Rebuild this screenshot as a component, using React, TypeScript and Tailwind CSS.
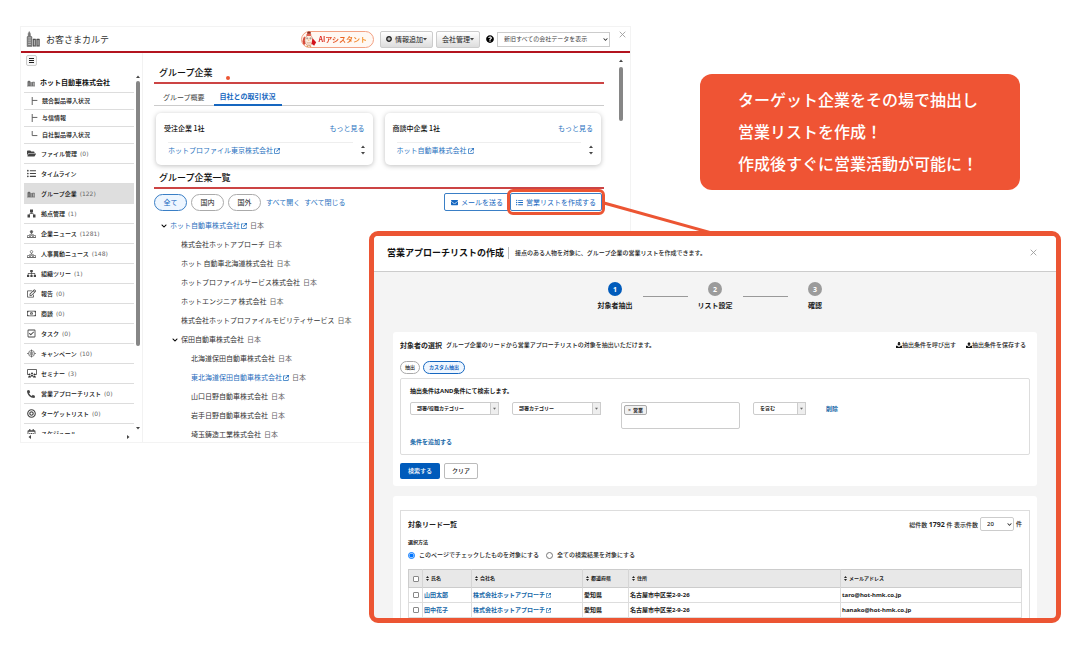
import { useState } from "react";
import type { ReactNode } from "react";
import {
  FaBullseye,
  FaChevronDown,
  FaEnvelope,
  FaFolderOpen,
  FaListUl,
  FaPhoneAlt,
  FaPlusCircle,
  FaQuestionCircle,
  FaRegCalendarAlt,
  FaRegCheckSquare,
  FaRegEdit,
  FaRegMoneyBillAlt,
  FaSitemap,
} from "react-icons/fa";
import { FaArrowUpRightFromSquare } from "react-icons/fa6";

/* ---------- Icons ---------- */

const LogoIcon = () => (
  <svg viewBox="0 0 26 30" className="h-4 w-3.5" fill="none">
    <path d="M2 29V11l2-2V5l2-4 2 4v4l3 2v18z" fill="#777" stroke="#666" />
    <path d="M4 13h5M4 17h5M4 21h5M4 25h5" stroke="#ddd" strokeWidth="1.500" />
    <path d="M13 29V15h5v14M20 29V15h5v14" fill="#555" stroke="#444" />
    <path d="M15.500 17v10M22.500 17v10" stroke="#ddd" strokeWidth="1.500" />
  </svg>
);

const BuildingIcon = () => (
  <svg viewBox="0 0 16 14" className="h-2 w-2" fill="none">
    <path d="M1 13V4l3-2 3 2v9z" fill="#666" />
    <path d="M7 13V6h4v7M11 13V5h4v8" fill="#999" stroke="#666" />
    <path d="M4 6v6M13 7v4" stroke="#ccc" strokeWidth=".8" />
    <path d="M0 13.500h16" stroke="#666" />
  </svg>
);

const NewsIcon = ({ head }: { head: string }) => (
  <svg viewBox="0 0 18 16" className="h-2 w-[9px]" fill="none" stroke="#555" strokeWidth="1.300">
    <circle cx="9" cy="3.500" r="2.500" fill={head} />
    <path d="M9 6v3M4 10l5-2 5 2" />
    <path d="M1 15v-4h4v4zM7 15v-4h4v4zM13 15v-4h4v4zM0 15h18" />
  </svg>
);

const BaseIcon = () => (
  <svg viewBox="0 0 18 18" className="h-[9px] w-[9px]" fill="#444">
    <path d="M6 1h6v6H6zM1 11h5v6H1zM12 11h5v6h-5z" />
    <path d="M9 7v3M3.500 11l5.500-3 5.500 3" fill="none" stroke="#444" strokeWidth="1.500" />
  </svg>
);

const CampaignIcon = () => (
  <svg viewBox="0 0 18 18" className="h-[9px] w-[9px]" fill="none" stroke="#444" strokeWidth="1.300">
    <circle cx="9" cy="9" r="6" />
    <path d="M9 1v16M6.500 6v6M11.500 6v6M0 9h3M15 9h3" />
  </svg>
);

const SeminarIcon = () => (
  <svg viewBox="0 0 20 18" className="h-[9px] w-2.5" fill="none" stroke="#333" strokeWidth="1.500">
    <path d="M4 11H1V1h18v10h-3" />
    <g fill="#333" stroke="none">
      <circle cx="5" cy="11" r="2" />
      <circle cx="10" cy="9" r="2" />
      <circle cx="15" cy="11" r="2" />
      <path d="M2 17c0-4 6-4 6 0zM7 15c0-4 6-4 6 0zM12 17c0-4 6-4 6 0z" />
    </g>
  </svg>
);

const BranchIcon = ({ last = false }: { last?: boolean }) => (
  <svg viewBox="0 0 12 14" className="h-2 w-[7px]" fill="none" stroke="#555" strokeWidth="1.600">
    <path d={last ? "M2 0v8h9" : "M2 0v14M2 6h9"} />
  </svg>
);

const MenuIcon = () => (
  <svg viewBox="0 0 5 5" className="h-[5px] w-[5px]" fill="#222">
    <path d="M0 0h5v1H0zM0 2h5v1H0zM0 4h5v1H0z" />
  </svg>
);

const MascotIcon = () => (
  <svg viewBox="0 0 44 48" className="h-4 w-[15px]">
    <path d="M8 16c-8 6-9 20-2 26l4-4z" fill="#d94a3a" />
    <ellipse cx="20" cy="28" rx="12" ry="16" fill="#fdeee0" stroke="#b5634b" strokeWidth="1.500" />
    <path d="M12 13c0-7 16-7 16 0l-3 2H15z" fill="#e2604e" />
    <path d="M15 5c0-5 11-5 11 0v3H15z" fill="#8c2a1e" />
    <circle cx="15" cy="22" r="2.500" fill="#fff" stroke="#7a4232" />
    <circle cx="25" cy="22" r="2.500" fill="#fff" stroke="#7a4232" />
    <circle cx="15" cy="22" r="1.200" fill="#333" />
    <circle cx="25" cy="22" r="1.200" fill="#333" />
    <path d="M18 26h4l-2 4z" fill="#e88b2b" />
    <path d="M13 33c4 3 10 3 14 0M15 38c3 2 7 2 10 0" fill="none" stroke="#c98163" strokeWidth="1.500" />
    <path d="M31 22l11 12-6 10-8-6z" fill="#d3121a" />
    <path d="M13 44h5v3h-5zM22 44h5v3h-5z" fill="#d48a2d" />
  </svg>
);

const CloseIcon = () => (
  <svg viewBox="0 0 10 10" className="h-[7px] w-[7px]" stroke="#999" strokeWidth="1.200">
    <path d="M1 1l8 8M9 1l-8 8" />
  </svg>
);

const Triangle = ({ dir = "down" }: { dir?: "up" | "down" | "left" | "right" }) => {
  const paths = {
    up: "M0 6l4-5 4 5z",
    down: "M0 2l4 5 4-5z",
    left: "M6 0L1 4l5 4z",
    right: "M2 0l5 4-5 4z",
  };
  return (
    <svg viewBox="0 0 8 8" className="h-1 w-1 shrink-0" fill="#444">
      <path d={paths[dir]} />
    </svg>
  );
};

const TrayIcon = ({ up = false }: { up?: boolean }) => (
  <svg viewBox="0 0 14 14" className="h-1.5 w-1.5" fill="#111">
    <path d={up ? "M7 0l4.500 5H9v4H5V5H2.500z" : "M5 0h4v4h2.500L7 9 2.500 4H5z"} />
    <path d="M0 9h3l2 2h4l2-2h3v5H0z" />
  </svg>
);

const SortIcon = () => (
  <svg viewBox="0 0 6 10" className="h-[5px] w-[3px]" fill="#222">
    <path d="M0 4l3-4 3 4zM0 6l3 4 3-4z" />
  </svg>
);

/* ---------- Data ---------- */

type MenuItem = { label: string; count?: number; icon: ReactNode; active?: boolean };

const subMenu = ["競合製品導入状況", "与信情報", "自社製品導入状況"];

const menu: MenuItem[] = [
  { label: "ファイル管理", count: 0, icon: <FaFolderOpen /> },
  { label: "タイムライン", icon: <FaListUl /> },
  { label: "グループ企業", count: 122, icon: <BuildingIcon />, active: true },
  { label: "拠点管理", count: 1, icon: <BaseIcon /> },
  { label: "企業ニュース", count: 1281, icon: <NewsIcon head="#555" /> },
  { label: "人事異動ニュース", count: 148, icon: <NewsIcon head="none" /> },
  { label: "組織ツリー", count: 1, icon: <FaSitemap /> },
  { label: "報告", count: 0, icon: <FaRegEdit /> },
  { label: "商談", count: 0, icon: <FaRegMoneyBillAlt /> },
  { label: "タスク", count: 0, icon: <FaRegCheckSquare /> },
  { label: "キャンペーン", count: 10, icon: <CampaignIcon /> },
  { label: "セミナー", count: 3, icon: <SeminarIcon /> },
  { label: "営業アプローチリスト", count: 0, icon: <FaPhoneAlt className="h-2 w-2" /> },
  { label: "ターゲットリスト", count: 0, icon: <FaBullseye /> },
  { label: "スケジュール", icon: <FaRegCalendarAlt /> },
];

const tree = [
  { name: "ホット自動車株式会社", level: 0, open: true, link: true },
  { name: "株式会社ホットアプローチ", level: 1 },
  { name: "ホット 自動車北海道株式会社", level: 1 },
  { name: "ホットプロファイルサービス株式会社", level: 1 },
  { name: "ホットエンジニア 株式会社", level: 1 },
  { name: "株式会社ホットプロファイルモビリティサービス", level: 1 },
  { name: "保田自動車株式会社", level: 1, open: true },
  { name: "北海道保田自動車株式会社", level: 2 },
  { name: "東北海道保田自動車株式会社", level: 2, link: true },
  { name: "山口日野自動車株式会社", level: 2 },
  { name: "岩手日野自動車株式会社", level: 2 },
  { name: "埼玉鋳造工業株式会社", level: 2 },
];

const indents = ["pl-[7px]", "pl-[18px]", "pl-7"];

const steps = ["対象者抽出", "リスト設定", "確認"];

const leads = [
  { name: "山田太郎", company: "株式会社ホットアプローチ", pref: "愛知県", address: "名古屋市中区栄2-9-26", mail: "taro@hot-hmk.co.jp" },
  { name: "田中花子", company: "株式会社ホットアプローチ", pref: "愛知県", address: "名古屋市中区栄2-9-26", mail: "hanako@hot-hmk.co.jp" },
];

/* ---------- Customer window ---------- */

const WindowHeader = () => (
  <header className="flex h-[26px] items-center border-b-2 border-[#b3141f] pr-1 pl-[5px]">
    <LogoIcon />
    <h1 className="ml-1.5 text-[9px] text-[#333]">お客さまカルテ</h1>
    <div className="ml-auto flex items-center gap-[3px] text-[7px] text-[#222]">
      <button className="flex h-[17px] items-center gap-px rounded-full border border-[#f3a183] bg-[#fff8f3] pr-1.5 font-bold">
        <MascotIcon />
        <span className="bg-linear-to-r from-[#d9101c] to-[#f79a28] bg-clip-text text-transparent">AIアシスタント</span>
      </button>
      <button className="ml-[3px] flex h-[17px] items-center gap-[3px] rounded-xs border border-[#ccc] bg-linear-to-b from-white to-[#ddd] px-[5px]">
        <FaPlusCircle className="h-1.5 w-1.5" />
        <span className="flex items-center">情報追加<Triangle /></span>
      </button>
      <button className="flex h-[17px] items-center rounded-xs border border-[#ccc] bg-linear-to-b from-white to-[#ddd] px-[5px]">
        会社管理<Triangle />
      </button>
      <FaQuestionCircle className="ml-[3px] h-2 w-2 text-black" />
      <div className="relative flex items-center">
        <select aria-label="会社データの表示" className="h-[15px] w-[113px] appearance-none border border-[#ccc] bg-white pl-1.5 text-[6px] text-[#444]">
          <option>新旧すべての会社データを表示</option>
        </select>
        <FaChevronDown className="pointer-events-none absolute right-0.5 h-[5px] w-[5px]" />
      </div>
      <button aria-label="閉じる" className="ml-1.5 self-start"><CloseIcon /></button>
    </div>
  </header>
);

const Sidebar = () => (
  <aside className="flex w-[122px] shrink-0 flex-col border-r border-[#f2f2f2] pl-[3px]">
    <button aria-label="メニュー" className="mt-0.5 ml-0.5 flex h-[11px] w-[11px] items-center justify-center rounded-xs border border-[#ccc] bg-[#f7f7f7]">
      <MenuIcon />
    </button>
    <div className="mt-[7px] flex h-[361px]">
      <nav className="min-w-0 flex-1 overflow-hidden text-[6px] font-medium text-[#111]">
        <a href="#" className="flex h-5 items-center border-b border-[#ddd] pl-[3px] text-[7px] font-bold">
          <span className="w-[13px]"><BuildingIcon /></span>
          ホット自動車株式会社
        </a>
        {subMenu.map((label, i) => (
          <a key={label} href="#" className="flex h-[17px] items-center border-b border-[#ddd] pl-[7px]">
            <span className="w-[11px]"><BranchIcon last={i === subMenu.length - 1} /></span>
            {label}
          </a>
        ))}
        {menu.map((item) => (
          <a
            key={item.label}
            href="#"
            className={`flex h-5 items-center border-b border-[#ddd] pl-[3px] ${item.active ? "bg-[#dedede]" : ""}`}
          >
            <span className="w-3.5 text-[9px] text-[#444]">{item.icon}</span>
            {item.label}
            {item.count !== undefined && (
              <span className="ml-[3px] font-['DejaVu_Sans',sans-serif] font-normal text-[#666]">({item.count})</span>
            )}
          </a>
        ))}
      </nav>
      <div className="flex w-2 flex-col items-center pt-0.5 pb-1">
        <Triangle dir="up" />
        <div className="mt-0.5 h-[265px] w-1 rounded-full bg-[#868686]" />
        <div className="flex-1" />
        <Triangle />
      </div>
    </div>
    <div className="flex justify-between pt-px pr-3 pl-1">
      <Triangle dir="left" />
      <Triangle dir="right" />
    </div>
  </aside>
);

const SectionTitle = ({ children }: { children: ReactNode }) => (
  <h2 className="border-b-2 border-[#cc4444] pl-[5px] text-[9px] leading-[18px] font-medium text-[#111]">{children}</h2>
);

const CompanyCard = ({ title, company }: { title: string; company: string }) => (
  <div className="h-[52px] rounded-[5px] bg-white px-2 pt-[9px] shadow-[0_1px_5px_rgba(0,0,0,0.25)]">
    <div className="flex items-center justify-between leading-3">
      <h3 className="font-medium text-[#111]">{title}</h3>
      <a href="#" className="text-[#2a73c0]">もっと見る</a>
    </div>
    <div className="mt-2 flex items-center justify-between pl-1">
      <a href="#" className="flex flex-1 items-center gap-px border-t border-[#eee] leading-[15px] text-[#2a73c0]">
        {company}
        <FaArrowUpRightFromSquare className="h-1.5 w-1.5" />
      </a>
      <span className="ml-2 flex flex-col gap-0.5">
        <Triangle dir="up" />
        <Triangle />
      </span>
    </div>
  </div>
);

const GroupCompanies = () => {
  const [area, setArea] = useState("全て");

  return (
    <main className="flex min-w-0 flex-1 pr-[7px] pl-[11px] text-[7px]">
      <div className="min-w-0 flex-1 pt-[11px]">
        <div className="relative">
          <SectionTitle>グループ企業</SectionTitle>
          <span className="absolute top-3 left-[72px] h-1 w-1 rounded-full bg-[#ec5533]" />
        </div>
        <div role="tablist" className="mt-[5px] flex border-b border-[#ccc]">
          <button role="tab" className="h-4 px-[9px] text-[#444]">グループ概要</button>
          <button role="tab" aria-selected className="-mb-px h-[17px] border-b-2 border-[#1667c0] px-1.5 font-bold text-[#1667c0]">
            自社との取引状況
          </button>
        </div>
        <div className="mt-[7px] grid grid-cols-2 gap-3 pr-[3px] pl-0.5">
          <CompanyCard title="受注企業 1社" company="ホットプロファイル東京株式会社" />
          <CompanyCard title="商談中企業 1社" company="ホット自動車株式会社" />
        </div>
        <div className="mt-1">
          <SectionTitle>グループ企業一覧</SectionTitle>
        </div>
        <div className="mt-1 flex items-center">
          <div className="flex gap-1">
            {["全て", "国内", "国外"].map((name) => (
              <button
                key={name}
                onClick={() => setArea(name)}
                className={`h-[17px] w-[33px] rounded-full border ${
                  area === name ? "border-[#3a7fc6] bg-[#eef6ff] text-[#1667c0]" : "border-[#aaa] bg-white text-[#222]"
                }`}
              >
                {name}
              </button>
            ))}
          </div>
          <a href="#" className="ml-[5px] text-[#2a73c0]">すべて開く</a>
          <a href="#" className="ml-1 text-[#2a73c0]">すべて閉じる</a>
          <div className="mr-0.5 ml-auto flex text-[#1667c0]">
            <button className="flex h-[18px] items-center gap-[3px] rounded-l-xs border border-[#3a7fc6] px-1.5">
              <FaEnvelope className="h-[7px] w-[7px]" />
              メールを送る
            </button>
            <div className="relative">
              <button className="flex h-[18px] items-center gap-[3px] rounded-xs border border-[#3a7fc6] px-[5px]">
                <FaListUl className="h-[7px] w-[7px]" />
                営業リストを作成する
              </button>
              <span className="pointer-events-none absolute -inset-x-[3px] -inset-y-1 rounded-md border-3 border-[#ec5533]" />
              <svg viewBox="0 0 110 32" className="pointer-events-none absolute top-2 left-full h-8 w-[110px]" fill="none">
                <path d="M2 2L110 32" stroke="#ec5533" strokeWidth="3" />
              </svg>
            </div>
          </div>
        </div>
        <ul className="mt-[5px] -mb-0.5 text-[#333]">
          {tree.map((node) => (
            <li key={node.name} className={`flex h-[19px] items-center ${indents[node.level]}`}>
              <span className="flex w-[9px] shrink-0">{node.open && <FaChevronDown className="h-1.5 w-1.5 text-black" />}</span>
              {node.link ? (
                <a href="#" className="flex items-center gap-px text-[#1f6dbc]">
                  {node.name}
                  <FaArrowUpRightFromSquare className="h-1.5 w-1.5" />
                </a>
              ) : (
                <span>{node.name}</span>
              )}
              <span className="ml-[3px] text-[#666]">日本</span>
            </li>
          ))}
        </ul>
      </div>
      <div className="ml-[15px] flex w-1 flex-col items-center pt-1.5">
        <Triangle dir="up" />
        <div className="mt-1 h-[54px] w-1 rounded-full bg-[#868686]" />
      </div>
    </main>
  );
};

/* ---------- Approach list dialog ---------- */

const PickBox = ({ label, value, width }: { label: string; value: string; width: string }) => (
  <div className={`relative h-[13px] ${width}`}>
    <select aria-label={label} className="h-full w-full appearance-none rounded-xs border border-[#ccc] bg-white pl-1.5 text-[5px] font-bold">
      <option>{value}</option>
    </select>
    <span className="pointer-events-none absolute inset-y-0 right-0 flex w-[9px] items-center justify-center border border-[#ccc] bg-[#eee]">
      <svg viewBox="0 0 8 8" className="h-[3px] w-[3px]" fill="#666"><path d="M0 2l4 5 4-5z" /></svg>
    </span>
  </div>
);

const Stepper = () => (
  <ol className="flex justify-center">
    {steps.map((label, i) => (
      <li key={label} className="flex">
        {i > 0 && <span className="mt-3.5 h-px w-[45px] bg-[#999]" />}
        <span className="flex w-[55px] flex-col items-center gap-1">
          <span
            className={`flex h-3.5 w-3.5 items-center justify-center rounded-full text-[7px] font-bold text-white ${
              i === 0 ? "bg-[#005bbb]" : "bg-[#9b9b9b]"
            }`}
          >
            {i + 1}
          </span>
          <span className="text-[7px] leading-3 font-bold">{label}</span>
        </span>
      </li>
    ))}
  </ol>
);

const TargetFilter = () => (
  <section className="rounded-[3px] bg-white px-[7px] pt-2 pb-[7px]">
    <div className="flex h-2.5 items-center gap-1">
      <h3 className="text-[7px] font-bold">対象者の選択</h3>
      <p>グループ企業のリードから営業アプローチリストの対象を抽出いただけます。</p>
      <div className="mr-1 ml-auto flex gap-2.5">
        <a href="#" className="flex items-center"><TrayIcon />抽出条件を呼び出す</a>
        <a href="#" className="flex items-center"><TrayIcon up />抽出条件を保存する</a>
      </div>
    </div>
    <div className="mt-[11px] flex gap-[3px] text-[5px]">
      <button className="h-[13px] w-5 rounded-full border border-[#aaa]">抽出</button>
      <button className="h-[13px] w-[42px] rounded-full border border-[#1667c0] bg-[#eef6ff] font-bold text-[#1667c0]">カスタム抽出</button>
    </div>
    <div className="mt-1 rounded-xs border border-[#ddd] px-[9px] pt-2 pb-[7px]">
      <p className="leading-2 font-bold">抽出条件はAND条件にて検索します。</p>
      <div className="mt-[7px] flex items-start">
        <PickBox label="項目" value="部署/役職カテゴリー" width="w-[89px]" />
        <div className="ml-[13px]">
          <PickBox label="カテゴリー" value="部署カテゴリー" width="w-[89px]" />
        </div>
        <div className="ml-5 flex h-[27px] w-[119px] items-start rounded-xs border border-[#ccc] p-0.5">
          <span className="flex h-2.5 shrink-0 items-center gap-0.5 rounded-xs border border-[#aaa] bg-[#f1f1f1] px-[3px] text-[5px] font-bold">
            <button aria-label="営業を外す" className="font-normal">×</button>
            営業
          </span>
          <input aria-label="値" className="min-w-0 flex-1 outline-none" />
        </div>
        <div className="ml-[13px]">
          <PickBox label="条件" value="を含む" width="w-[53px]" />
        </div>
        <a href="#" className="ml-5 leading-[15px] font-bold text-[#1667a8]">削除</a>
      </div>
      <a href="#" className="mt-2 block w-fit leading-[10px] font-bold text-[#1667a8]">条件を追加する</a>
    </div>
    <div className="mt-2 flex gap-1 font-medium">
      <button className="h-4 w-10 rounded-xs bg-[#005bbb] text-white">検索する</button>
      <button className="h-4 w-[34px] rounded-xs border border-[#bbb] bg-white">クリア</button>
    </div>
  </section>
);

const LeadList = () => {
  const [scope, setScope] = useState("page");

  return (
    <section className="mt-2.5 rounded-t-[3px] bg-white px-[7px] pt-3.5">
      <div className="border border-b-0 border-[#ddd] px-[7px] pt-1.5">
        <div className="flex h-3.5 items-center justify-between">
          <h3 className="text-[7px] font-bold">対象リード一覧</h3>
          <div className="flex items-center gap-0.5">
            <span>総件数 <b className="text-[7px]">1792</b> 件 表示件数</span>
            <div className="relative flex items-center">
              <select aria-label="表示件数" className="h-3.5 w-[34px] appearance-none rounded-xs border border-[#ccc] pl-1.5 font-medium">
                <option>20</option>
              </select>
              <FaChevronDown className="pointer-events-none absolute right-0.5 h-[5px] w-[5px]" />
            </div>
            <span>件</span>
          </div>
        </div>
        <fieldset>
          <legend className="pt-[7px] text-[5px] leading-2 font-bold">選択方法</legend>
          <div className="mt-1 flex h-2.5 items-center gap-[7px]">
            <label className="flex items-center gap-1">
              <input type="radio" name="scope" checked={scope === "page"} onChange={() => setScope("page")} className="m-0 h-[7px] w-[7px]" />
              このページでチェックしたものを対象にする
            </label>
            <label className="flex items-center gap-1">
              <input type="radio" name="scope" checked={scope === "all"} onChange={() => setScope("all")} className="m-0 h-[7px] w-[7px]" />
              全ての検索結果を対象にする
            </label>
          </div>
        </fieldset>
        <table className="mt-[9px] w-full table-fixed border-collapse text-left font-bold">
          <thead>
            <tr className="h-[18px] border border-[#ccc] bg-[#e8e8e8] text-[5px]">
              <th className="w-3.5 border-r border-[#d5d5d5] p-0">
                <input
                  type="checkbox"
                  aria-label="すべて選択"
                  className="mx-auto block h-1.5 w-1.5 appearance-none rounded-[1px] border border-[#888] bg-white checked:bg-[#005bbb]"
                />
              </th>
              {[
                { label: "氏名", width: "w-[49px]" },
                { label: "会社名", width: "w-[111px]" },
                { label: "都道府県", width: "w-[46px]" },
                { label: "住所", width: "w-auto" },
                { label: "メールアドレス", width: "w-[181px]" },
              ].map((col) => (
                <th key={col.label} className={`border-r border-[#d5d5d5] py-0 pr-0 pl-[3px] ${col.width}`}>
                  <span className="flex items-center gap-0.5"><SortIcon />{col.label}</span>
                </th>
              ))}
            </tr>
          </thead>
          <tbody>
            {leads.map((lead) => (
              <tr key={lead.name} className="h-[15px] border border-[#ddd] leading-2">
                <td className="border-r border-[#ddd] p-0">
                  <input
                    type="checkbox"
                    aria-label={lead.name}
                    className="mx-auto block h-1.5 w-1.5 appearance-none rounded-[1px] border border-[#888] bg-white checked:bg-[#005bbb]"
                  />
                </td>
                <td className="border-r border-[#ddd] p-0 pl-px"><a href="#" className="text-[#1667a8]">{lead.name}</a></td>
                <td className="border-r border-[#ddd] p-0 pl-px">
                  <a href="#" className="flex items-center gap-px text-[#1667a8]">
                    {lead.company}
                    <FaArrowUpRightFromSquare className="h-[5px] w-[5px]" />
                  </a>
                </td>
                <td className="border-r border-[#ddd] p-0 pl-px">{lead.pref}</td>
                <td className="border-r border-[#ddd] p-0 pl-px">{lead.address}</td>
                <td className="p-0 pl-px">{lead.mail}</td>
              </tr>
            ))}
          </tbody>
        </table>
      </div>
    </section>
  );
};

const ApproachDialog = () => (
  <div
    role="dialog"
    aria-label="営業アプローチリストの作成"
    className="absolute top-[231px] right-[22px] left-[369px] overflow-hidden rounded-[9px] border-5 border-[#ec5533] bg-[#f4f4f4] font-['Noto_Sans','Noto_Sans_CJK_JP',sans-serif] text-[6px] font-medium text-[#222]"
  >
    <header className="flex h-9 items-center border-b border-[#ccc] bg-white pr-[19px] pb-0.5 pl-[13px]">
      <h2 className="text-[9px] font-bold text-[#111]">営業アプローチリストの作成</h2>
      <p className="ml-1 border-l border-[#bbb] pl-1.5 leading-3">
        接点のある人物を対象に、グループ企業の営業リストを作成できます。
      </p>
      <button aria-label="閉じる" className="ml-auto"><CloseIcon /></button>
    </header>
    <div className="pt-2.5 pr-[19px] pl-[19px]">
      <Stepper />
      <div className="mt-5">
        <TargetFilter />
        <LeadList />
      </div>
    </div>
  </div>
);

export default function App() {
  return (
    <div className="relative min-h-screen bg-white font-['Noto_Sans_CJK_JP',sans-serif] leading-none">
      <div className="grid grid-cols-[611fr_320fr] items-start gap-[69px] pt-[26px] pr-[63px] pl-5">
        <div className="border border-[#f3f3f3] bg-white">
          <WindowHeader />
          <div className="flex">
            <Sidebar />
            <GroupCompanies />
          </div>
        </div>
        <p className="mt-12 rounded-xl bg-[#ef5434] pt-[9px] pb-[11px] pl-[38px] text-base leading-8 font-medium text-white">
          ターゲット企業をその場で抽出し
          <br />
          営業リストを作成！
          <br />
          作成後すぐに営業活動が可能に！
        </p>
      </div>
      <ApproachDialog />
    </div>
  );
}
